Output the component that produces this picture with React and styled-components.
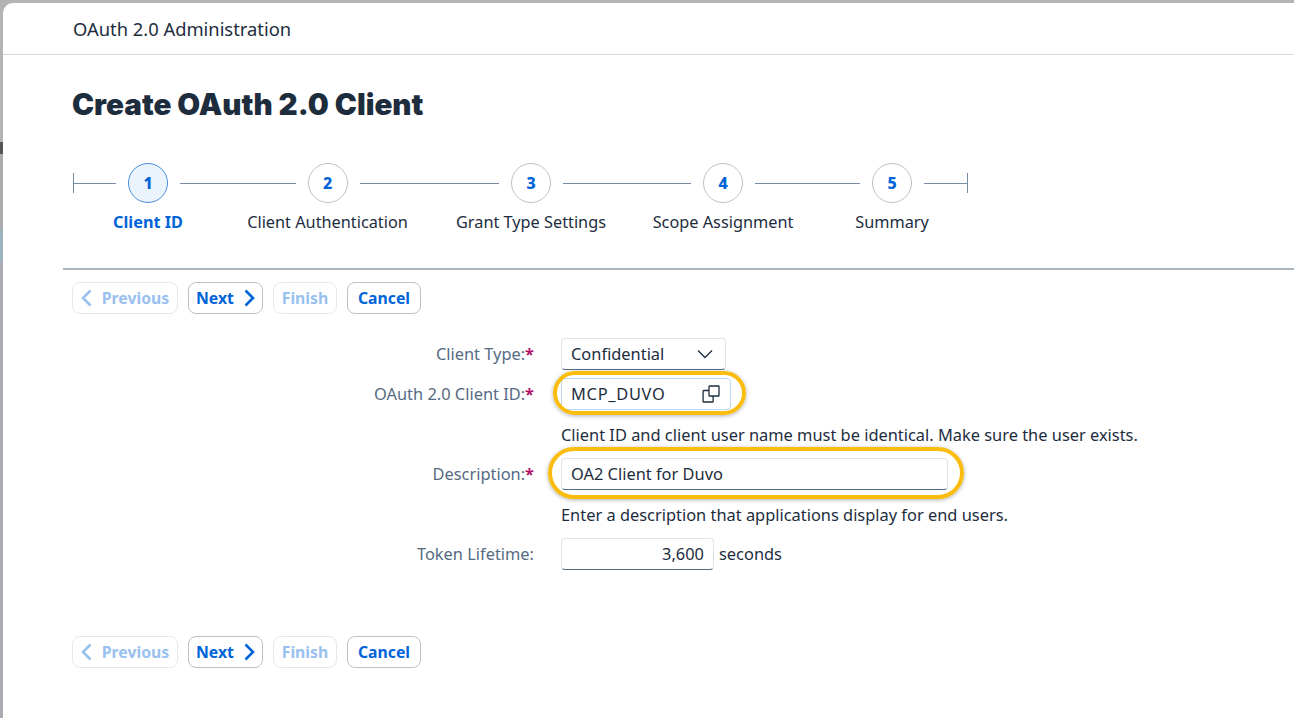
import React from "react";
import styled, { createGlobalStyle } from "styled-components";

const Global = createGlobalStyle`
  html, body { margin: 0; padding: 0; height: 100%; overflow: hidden; }
  body { font-family: "Noto Sans", "Open Sans", sans-serif; color: #1d2d3e; }
  #root { height: 100%; }
`;

const Backdrop = styled.div`
  height: 718px;
  box-sizing: border-box;
  padding: 3px 0 0 3px;
  background: linear-gradient(
    to bottom,
    #b4b4b6 0, #b4b4b6 142px, #55565a 142px, #55565a 154px,
    #a9abae 154px, #a9abae 230px, #9db3be 230px, #9db3be 262px,
    #abacb2 262px, #abacb2 718px
  );
`;

const Win = styled.main`
  height: 100%;
  background: #fff;
  border-top-left-radius: 10px;
  overflow: hidden;
`;

const Shell = styled.header`
  height: 52px;
  box-sizing: border-box;
  border-bottom: 1px solid #d9d9d9;
  padding: 13px 0 0 70px;
  font-size: 18.35px;
  line-height: 25px;
  color: #1d2d3e;
`;

const Title = styled.h1`
  margin: 29px 0 0 69px;
  font-family: "Inter", sans-serif;
  font-weight: 900;
  font-size: 29.6px;
  line-height: 40px;
  color: #1d2d3e;
`;

const Stepper = styled.ol`
  list-style: none;
  margin: 39px 0 0 70px;
  padding: 0;
  display: flex;
  align-items: flex-start;
  height: 105px;
`;

const Line = styled.li`
  flex: none;
  width: ${(p) => p.$w}px;
  height: 1px;
  margin: 20px ${(p) => (p.$last ? 0 : 12)}px 0 ${(p) => (p.$first ? 0 : 12)}px;
  background: #758ca4;
  position: relative;
  &::after {
    content: "";
    display: ${(p) => (p.$first || p.$last ? "block" : "none")};
    position: absolute;
    top: -10px;
    ${(p) => (p.$first ? "left: 0;" : "right: 0;")}
    width: 1px;
    height: 20px;
    background: #758ca4;
  }
`;

const Step = styled.li`
  flex: none;
  width: 40px;
  display: flex;
  flex-direction: column;
  align-items: center;
`;

const Circle = styled.span`
  box-sizing: border-box;
  width: 40px;
  height: 40px;
  border-radius: 50%;
  display: flex;
  align-items: center;
  justify-content: center;
  font-size: 16px;
  font-weight: 800;
  color: #0064d9;
  border: 1px solid ${(p) => (p.$active ? "#4a8fdc" : "#bcc3ca")};
  background: ${(p) => (p.$active ? "#ebf3fd" : "#fff")};
`;

const StepLabel = styled.span`
  margin-top: 7px;
  white-space: nowrap;
  font-size: 16.3px;
  line-height: 24px;
  font-weight: ${(p) => (p.$active ? 700 : 400)};
  color: ${(p) => (p.$active ? "#0064d9" : "#1d2d3e")};
`;

const Divider = styled.hr`
  margin: 0 0 0 60px;
  border: 0;
  height: 2px;
  background: #a9b4be;
`;

const Toolbar = styled.div`
  display: flex;
  gap: 10px;
  margin: ${(p) => p.$top}px 0 0 69px;
`;

const Btn = styled.button`
  box-sizing: border-box;
  height: 32px;
  width: ${(p) => p.$w}px;
  padding: 0 0 1px;
  display: flex;
  align-items: center;
  justify-content: center;
  gap: 10px;
  font-family: inherit;
  font-size: 15.8px;
  font-weight: 700;
  border-radius: 8px;
  background: #fff;
  color: #0064d9;
  border: 1px solid #bcc3ca;
  ${(p) => p.disabled && "color: #99c1f0; border-color: #e6e9ec;"}
  svg { flex: none; margin-top: 1px; }
`;

const Form = styled.div`
  display: grid;
  grid-template-columns: 531px 1fr;
  grid-auto-rows: 40px;
  align-items: center;
  column-gap: 27px;
  margin-top: 20px;
  height: 240px;
`;

const Label = styled.label`
  text-align: right;
  font-size: 16.4px;
  padding-bottom: 2px;
  color: #556b82;
  white-space: nowrap;
`;

const Req = styled.span`
  color: #b0136b;
  font-weight: 700;
`;

const Cell = styled.div`
  grid-column: 2;
  display: flex;
  align-items: center;
  gap: 5px;
  position: relative;
  font-size: 16.4px;
  white-space: nowrap;
`;

const Input = styled.div`
  box-sizing: border-box;
  width: ${(p) => p.$w}px;
  height: 32px;
  border: 1px solid ${(p) => (p.$focus ? "#bcd6f5" : "#dfe3e7")};
  border-bottom-color: ${(p) => (p.$focus ? "#bcd6f5" : "#556b82")};
  border-radius: 4px;
  background: #fff;
  padding: 0 ${(p) => p.$pr ?? 9}px 2px 9px;
  display: flex;
  align-items: center;
  justify-content: ${(p) => (p.$right ? "flex-end" : "space-between")};
  font-size: 16.4px;
  color: #1d2d3e;
  svg { flex: none; margin-top: 2px; }
`;

const WideValue = styled.span`
  letter-spacing: 0.7px;
`;

const Ring = styled.span`
  position: absolute;
  left: ${(p) => p.$l}px;
  top: ${(p) => p.$t}px;
  width: ${(p) => p.$w}px;
  height: ${(p) => p.$h}px;
  box-sizing: border-box;
  border: 4px solid #fbbd0d;
  border-radius: ${(p) => p.$h / 2}px;
  box-shadow: 0 1px 4px rgba(80, 80, 80, 0.45);
  pointer-events: none;
`;

const Hint = styled.div`
  grid-column: 2;
  font-size: 16.4px;
  color: #1d2d3e;
  white-space: nowrap;
`;

const Unit = styled.span`
  padding-bottom: 2px;
`;

const Chevron = ({ dir }) => (
  <svg width="11" height="18" viewBox="0 0 11 18" fill="none" stroke="currentColor" strokeWidth="2.6">
    <path d={dir === "left" ? "M9.5 1.5 2 9l7.5 7.5" : "M1.5 1.5 9 9l-7.5 7.5"} />
  </svg>
);

const Actions = ({ top }) => (
  <Toolbar $top={top}>
    <Btn $w={106} disabled><Chevron dir="left" />Previous</Btn>
    <Btn $w={75}>Next<Chevron /></Btn>
    <Btn $w={64} disabled>Finish</Btn>
    <Btn $w={74}>Cancel</Btn>
  </Toolbar>
);

const steps = [
  ["Client ID", 30],
  ["Client Authentication", 115.5],
  ["Grant Type Settings", 139.5],
  ["Scope Assignment", 128],
  ["Summary", 105],
];

export default function App() {
  return (
    <Backdrop>
      <Global />
      <Win>
        <Shell>OAuth 2.0 Administration</Shell>
        <Title>Create OAuth 2.0 Client</Title>
        <Stepper>
          <Line $first $w={43} />
          {steps.map(([name], i) => (
            <React.Fragment key={name}>
              <Step>
                <Circle $active={i === 0}>{i + 1}</Circle>
                <StepLabel $active={i === 0}>{name}</StepLabel>
              </Step>
              {i < 4 ? <Line $w={steps[i + 1][1]} /> : <Line $last $w={44} />}
            </React.Fragment>
          ))}
        </Stepper>
        <Divider />
        <Actions top={12} />
        <Form>
          <Label>Client Type:<Req>*</Req></Label>
          <Cell>
            <Input $w={165} $pr={11}>
              Confidential
              <svg width="18" height="10" viewBox="0 0 18 10" fill="none" stroke="#1d2d3e" strokeWidth="1.3"><path d="M2 1.5 9 8.5l7-7" /></svg>
            </Input>
          </Cell>
          <Label>OAuth 2.0 Client ID:<Req>*</Req></Label>
          <Cell>
            <Input $w={170} $focus $pr={10}>
              <WideValue>MCP_DUVO</WideValue>
              <svg width="18" height="18" viewBox="0 0 18 18" fill="none" stroke="#1d2d3e" strokeWidth="1.3">
                <rect x="7" y="1" width="10" height="10" rx="0.6" />
                <path d="M7 5.5H1.7a.6.6 0 0 0-.6.6V16.4a.6.6 0 0 0 .6.6h8.8a.6.6 0 0 0 .6-.6V11" />
              </svg>
            </Input>
            <Ring $l={-8} $t={-7} $w={193} $h={44} />
          </Cell>
          <Hint>Client ID and client user name must be identical. Make sure the user exists.</Hint>
          <Label>Description:<Req>*</Req></Label>
          <Cell>
            <Input $w={387}>OA2 Client for Duvo</Input>
            <Ring $l={-13} $t={-11} $w={416} $h={52} />
          </Cell>
          <Hint>Enter a description that applications display for end users.</Hint>
          <Label>Token Lifetime:</Label>
          <Cell>
            <Input $w={153} $right>3,600</Input>
            <Unit>seconds</Unit>
          </Cell>
        </Form>
        <Actions top={62} />
      </Win>
    </Backdrop>
  );
}
